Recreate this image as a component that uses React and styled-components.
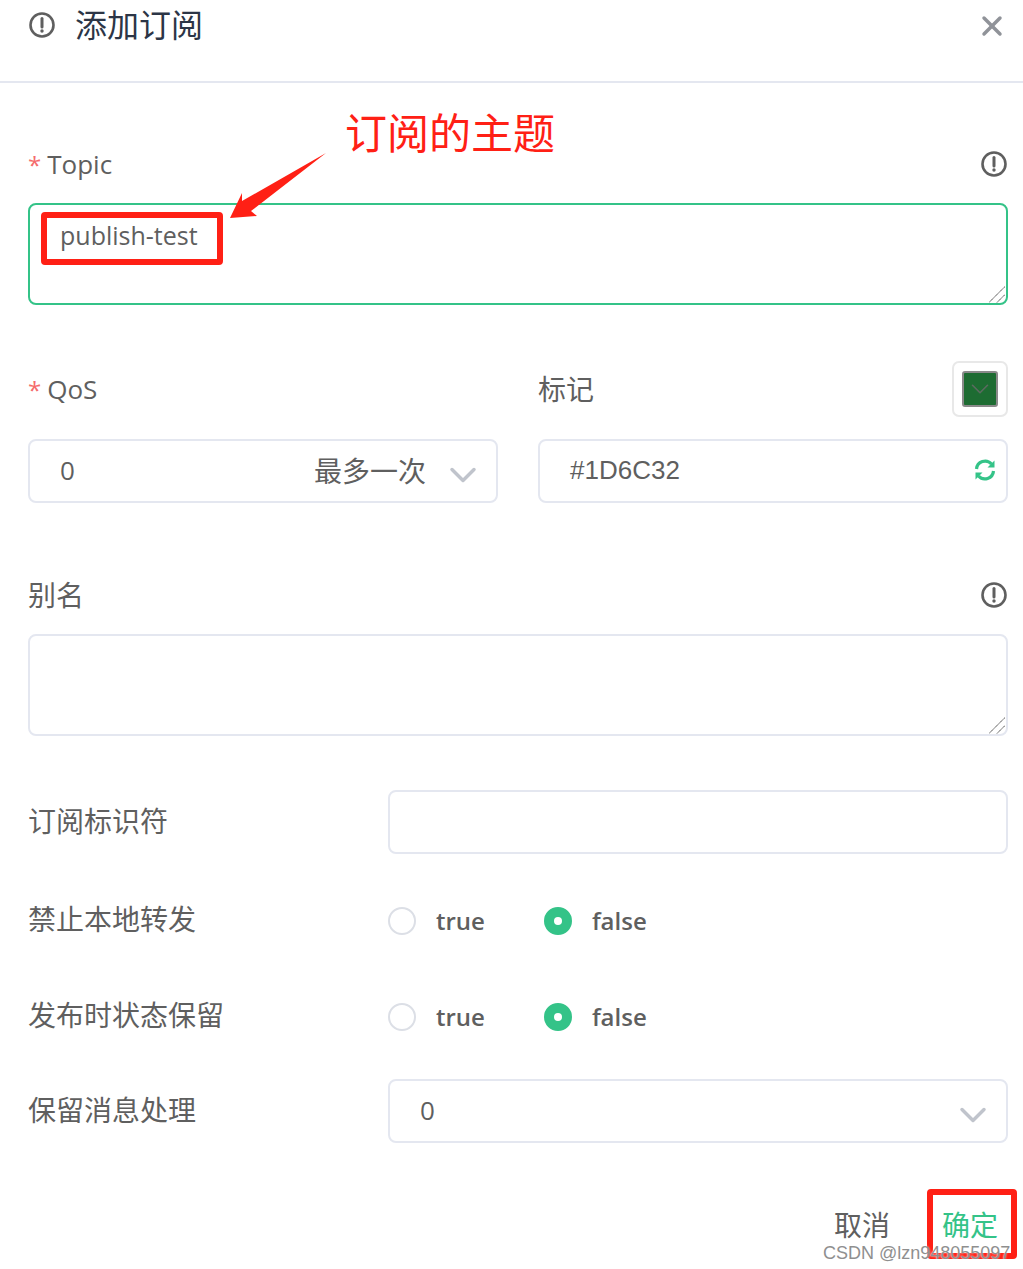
import styled, { createGlobalStyle } from "styled-components";
import { ChevronDown, X } from "lucide-react";

const GlobalStyle = createGlobalStyle`
  html, body {
    margin: 0;
    padding: 0;
    background: #fff;
  }
  * {
    box-sizing: border-box;
  }
`;

const fontStack = `"Open Sans", "Noto Sans CJK SC", sans-serif`;
const GREEN = "#34c388";
const BORDER = "#e4e7f0";
const RED = "#ff2015";

const Dialog = styled.div`
  position: relative;
  width: 1023px;
  height: 1269px;
  overflow: hidden;
  background: #fff;
  font-family: ${fontStack};
  color: #5f5f5f;
`;

const Header = styled.header`
  height: 83px;
  border-bottom: 2px solid ${BORDER};
  padding: 0 15px 0 28px;
  display: flex;
  justify-content: space-between;
  align-items: flex-start;
`;

const HeaderTitle = styled.div`
  display: flex;
  align-items: center;
  gap: 19px;
  height: 50px;
`;

const Title = styled.h2`
  margin: -4px 0 0;
  font-size: 32px;
  font-weight: 400;
  color: #2c3546;
`;

const CloseButton = styled.div`
  height: 52px;
  display: flex;
  align-items: center;
  color: #909399;
`;

const Body = styled.div`
  padding: 61px 15px 0 28px;
`;

const LabelRow = styled.div`
  display: flex;
  justify-content: space-between;
  align-items: center;
  height: ${({ $h }) => $h || 40}px;
  margin-bottom: ${({ $mb }) => $mb || 19}px;
`;

const Label = styled.label`
  font-size: 28px;
  line-height: 40px;
  color: #5f5f5f;
`;

const LatinLabel = styled.span`
  font-size: 26px;
`;

const Star = styled.span`
  color: #f56c6c;
  margin-right: 6px;
  font-size: 24px;
`;

const TextAreaWrap = styled.div`
  position: relative;
`;

const TextArea = styled.textarea`
  display: block;
  width: 100%;
  height: 102px;
  padding: 12px 30px;
  border: 2px solid ${({ $active }) => ($active ? GREEN : BORDER)};
  border-radius: 8px;
  outline: none;
  resize: none;
  font-family: ${fontStack};
  font-size: 25px;
  line-height: 36px;
  color: #5f5f5f;
`;

const Grip = styled.svg`
  position: absolute;
  right: 0;
  bottom: 0;
  pointer-events: none;
`;

const Columns = styled.div`
  display: grid;
  grid-template-columns: 470px 470px;
  column-gap: 40px;
  margin-top: 56px;
  margin-bottom: 72px;
`;

const Field = styled.div`
  min-width: 0;
`;

const Control = styled.div`
  height: 64px;
  border: 2px solid ${BORDER};
  border-radius: 8px;
  padding: 0 11px 2px 30px;
  display: flex;
  align-items: center;
  justify-content: space-between;
  font-size: 26px;
  color: #5f5f5f;
`;

const PlainText = styled.span`
  font-family: "Liberation Sans", sans-serif;
  font-size: 26px;
`;

const SelectRight = styled.div`
  display: flex;
  align-items: center;
  gap: 15px;
`;

const OptionHint = styled.span`
  font-size: 28px;
`;

const Arrow = styled(ChevronDown)`
  color: #c0c4cc;
  margin-top: 10px;
`;

const Swatch = styled.div`
  width: 56px;
  height: 56px;
  border: 2px solid #e8e8e8;
  border-radius: 7px;
  padding: 8px;
`;

const SwatchFill = styled.div`
  width: 100%;
  height: 100%;
  background: #1d6c32;
  border: 2px solid #8a8a8a;
  border-radius: 3px;
  display: flex;
  align-items: center;
  justify-content: center;
  color: #5b6b60;
`;

const Rows = styled.div`
  margin-top: 54px;
`;

const Row = styled.div`
  display: grid;
  grid-template-columns: 360px 1fr;
  align-items: center;
  height: 64px;
  margin-bottom: ${({ $mb }) => $mb || 0}px;
`;

const RowLabel = styled(Label)`
  margin-top: -3px;
`;

const RadioGroup = styled.div`
  display: flex;
  align-items: center;
  gap: 59px;
`;

const RadioItem = styled.div`
  display: flex;
  align-items: center;
  gap: 20px;
  font-size: 24px;
  font-weight: 600;
`;

const RadioDot = styled.span`
  width: 28px;
  height: 28px;
  margin-top: 1px;
  border-radius: 50%;
  border: 2px solid ${({ $checked }) => ($checked ? GREEN : "#dcdfe6")};
  background: ${({ $checked }) => ($checked ? GREEN : "#fff")};
  display: flex;
  align-items: center;
  justify-content: center;
  &::after {
    content: "";
    width: 8px;
    height: 8px;
    border-radius: 50%;
    background: #fff;
  }
`;

const Footer = styled.footer`
  display: flex;
  justify-content: flex-end;
  gap: 52px;
  padding: 0 10px 0 0;
  margin-top: 62px;
`;

const FooterButton = styled.span`
  font-size: 28px;
  line-height: 40px;
  color: ${({ $primary }) => ($primary ? GREEN : "#5f5f5f")};
`;

/* screenshot annotations, they lie over the form */
const Callout = styled.div`
  position: absolute;
  left: 345px;
  top: 103px;
  font-size: 42px;
  line-height: 60px;
  color: ${RED};
`;

const Pointer = styled.svg`
  position: absolute;
  left: 0;
  top: 0;
  pointer-events: none;
`;

const Highlight = styled.div`
  position: absolute;
  left: ${({ $x }) => $x}px;
  top: ${({ $y }) => $y}px;
  width: ${({ $w }) => $w}px;
  height: ${({ $h }) => $h}px;
  border: 6px solid ${RED};
  border-radius: 4px;
`;

const Watermark = styled.div`
  position: absolute;
  left: 823px;
  top: 1243px;
  font-family: "Liberation Sans", sans-serif;
  font-size: 18px;
  line-height: 20px;
  white-space: nowrap;
  color: #8f8f8f;
  text-shadow: 0 0 2px #fff;
`;

const InfoIcon = ({ size = 28 }) => (
  <svg width={size} height={size} viewBox="0 0 28 28" fill="none">
    <circle cx="14" cy="14" r="11.5" stroke="#5f5f5f" strokeWidth="2.6" />
    <path d="M14 7.5v8.5" stroke="#5f5f5f" strokeWidth="3" strokeLinecap="round" />
    <circle cx="14" cy="20" r="1.7" fill="#5f5f5f" />
  </svg>
);

const RefreshSvg = styled.svg`
  margin-right: -2px;
`;

const RefreshIcon = () => (
  <RefreshSvg width="24" height="26" viewBox="0 0 24 24" fill="none">
    <path d="M3.5 11a8.6 8.6 0 0 1 15-5" stroke={GREEN} strokeWidth="3.2" />
    <path d="M20.5 13a8.6 8.6 0 0 1-15 5" stroke={GREEN} strokeWidth="3.2" />
    <path d="M14.5 9.5h7v-7z" fill={GREEN} />
    <path d="M9.5 14.5h-7v7z" fill={GREEN} />
  </RefreshSvg>
);

const ResizeGrip = () => (
  <Grip width="19" height="19" viewBox="0 0 19 19" fill="none">
    <path d="M0 16.5L16 0.5M8 16.5L16 8.5" stroke="#444" strokeWidth="1" strokeDasharray="1.4 0.4" />
  </Grip>
);

const BoolRadios = () => (
  <RadioGroup>
    <RadioItem>
      <RadioDot />
      true
    </RadioItem>
    <RadioItem>
      <RadioDot $checked />
      false
    </RadioItem>
  </RadioGroup>
);

const App = () => {
  return (
    <Dialog>
      <GlobalStyle />
      <Header>
        <HeaderTitle>
          <InfoIcon />
          <Title>添加订阅</Title>
        </HeaderTitle>
        <CloseButton>
          <X size={32} strokeWidth={2.6} />
        </CloseButton>
      </Header>
      <Body>
        <LabelRow>
          <Label>
            <Star>*</Star>
            <LatinLabel>Topic</LatinLabel>
          </Label>
          <InfoIcon />
        </LabelRow>
        <TextAreaWrap>
          <TextArea $active readOnly value="publish-test" />
          <ResizeGrip />
        </TextAreaWrap>

        <Columns>
          <Field>
            <LabelRow $h={56} $mb={22}>
              <Label>
                <Star>*</Star>
                <LatinLabel>QoS</LatinLabel>
              </Label>
            </LabelRow>
            <Control>
              <span>0</span>
              <SelectRight>
                <OptionHint>最多一次</OptionHint>
                <Arrow size={44} strokeWidth={1.9} />
              </SelectRight>
            </Control>
          </Field>
          <Field>
            <LabelRow $h={56} $mb={22}>
              <Label>标记</Label>
              <Swatch>
                <SwatchFill>
                  <ChevronDown size={30} strokeWidth={1.3} />
                </SwatchFill>
              </Swatch>
            </LabelRow>
            <Control>
              <PlainText>#1D6C32</PlainText>
              <RefreshIcon />
            </Control>
          </Field>
        </Columns>

        <LabelRow>
          <Label>别名</Label>
          <InfoIcon />
        </LabelRow>
        <TextAreaWrap>
          <TextArea readOnly value="" />
          <ResizeGrip />
        </TextAreaWrap>

        <Rows>
          <Row $mb={34}>
            <RowLabel>订阅标识符</RowLabel>
            <Control />
          </Row>
          <Row $mb={32}>
            <RowLabel>禁止本地转发</RowLabel>
            <BoolRadios />
          </Row>
          <Row $mb={31}>
            <RowLabel>发布时状态保留</RowLabel>
            <BoolRadios />
          </Row>
          <Row>
            <RowLabel>保留消息处理</RowLabel>
            <Control>
              <span>0</span>
              <Arrow size={44} strokeWidth={1.9} />
            </Control>
          </Row>
        </Rows>

        <Footer>
          <FooterButton>取消</FooterButton>
          <FooterButton $primary>确定</FooterButton>
        </Footer>
      </Body>

      <Callout>订阅的主题</Callout>
      <Pointer width="400" height="260" viewBox="0 0 400 260">
        <path d="M326 153L242 201L242 193L230 218L257 216L251 211Z" fill={RED} />
      </Pointer>
      <Highlight $x={41} $y={212} $w={182} $h={53} />
      <Highlight $x={927} $y={1189} $w={90} $h={70} />
      <Watermark>CSDN @lzn948055097</Watermark>
    </Dialog>
  );
};

export default App;
